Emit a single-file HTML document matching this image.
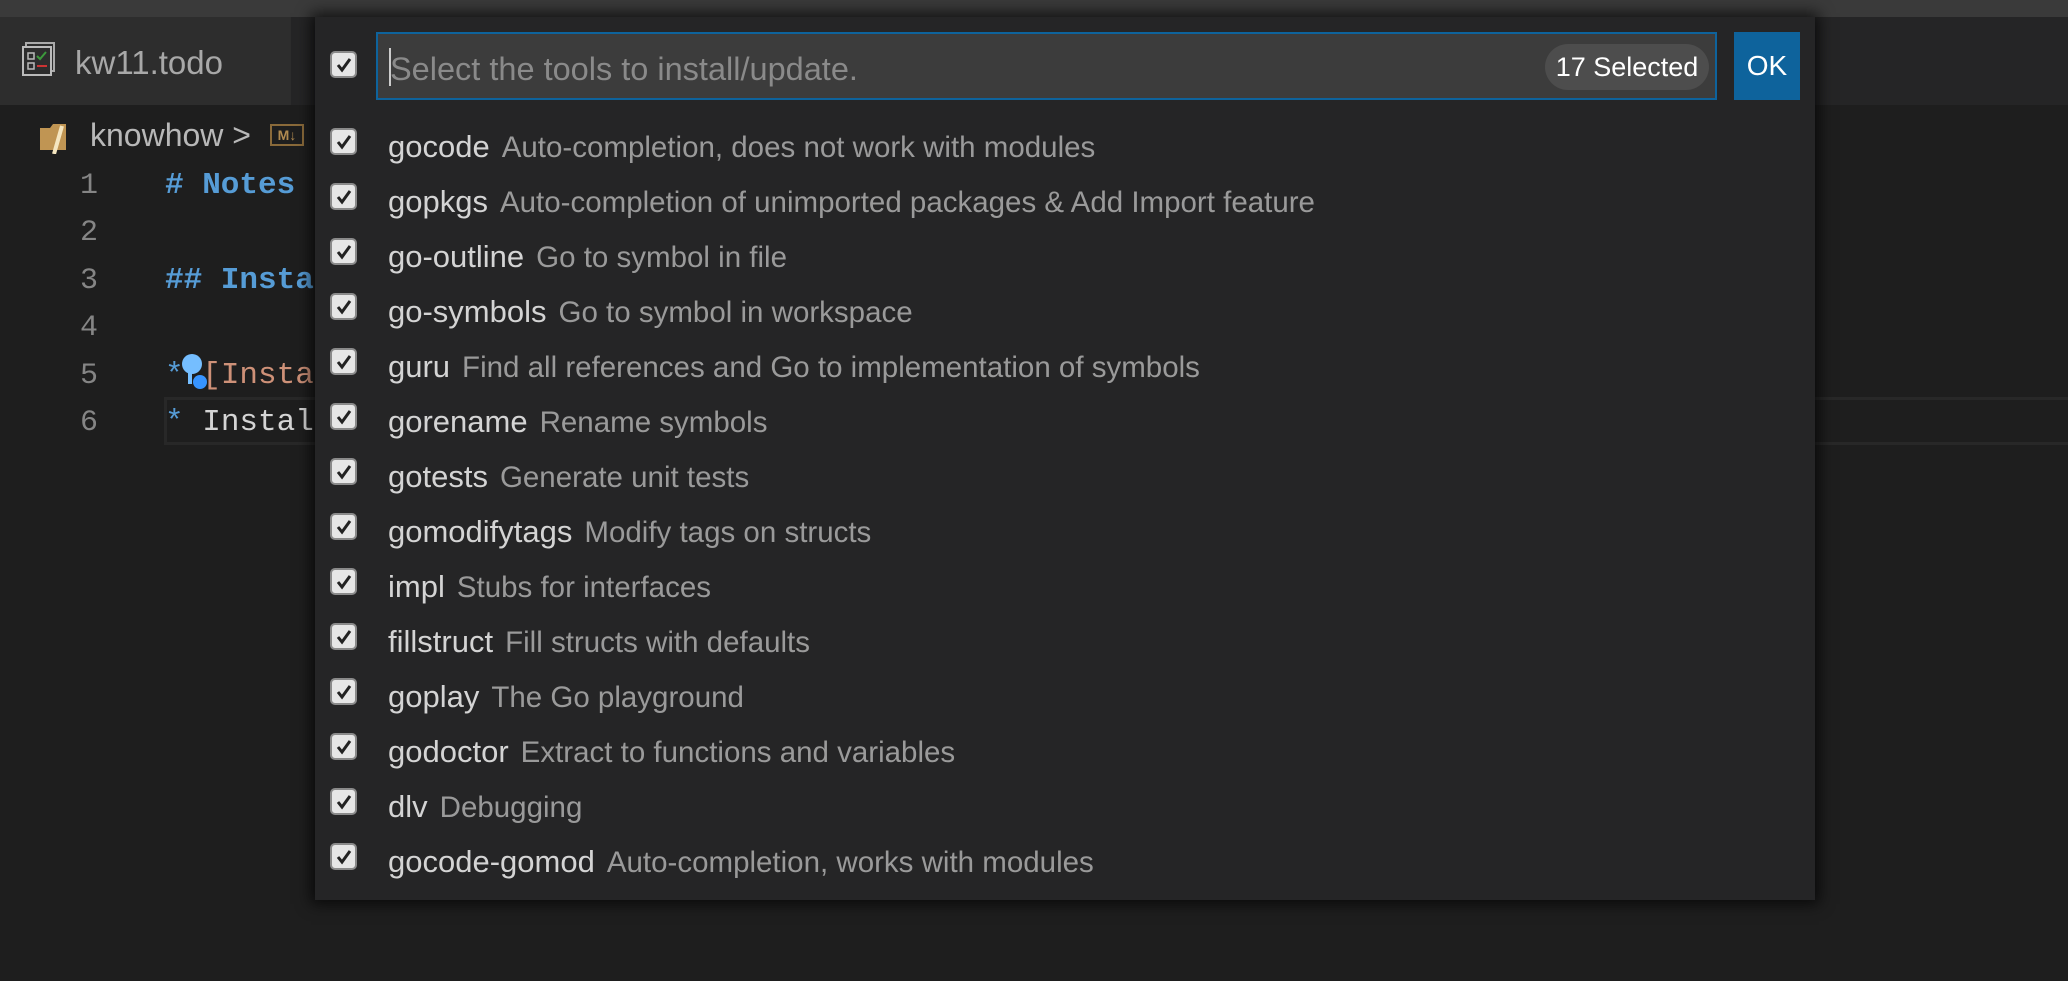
<!DOCTYPE html>
<html><head><meta charset="utf-8"><style>
*{margin:0;padding:0;box-sizing:border-box}
body{width:2068px;height:981px;background:#1e1e1e;position:relative;overflow:hidden;font-family:"Liberation Sans",sans-serif}
.top{position:absolute;left:0;top:0;width:2068px;height:17px;background:#3a3a3a}
.tabs{position:absolute;left:0;top:17px;width:2068px;height:88px;background:#252526}
.tab{position:absolute;left:0;top:0;width:293px;height:88px;background:#2d2d2d;border-right:2px solid #252526}
.tab span{position:absolute;left:75px;top:27px;font-size:33px;color:#a8a8a8}
.crumb{position:absolute;left:90px;top:117px;font-size:32px;color:#b8b8b8}
.ln{position:absolute;left:0;width:98px;text-align:right;font-family:"Liberation Mono",monospace;font-size:30px;color:#858585}
.code{position:absolute;left:165px;font-family:"Liberation Mono",monospace;font-size:31px;white-space:pre}
.hl{position:absolute;left:164px;top:397px;width:1910px;height:48px;border:3px solid #282828}
.qp{position:absolute;left:315px;top:17px;width:1500px;height:883px;background:#252526;box-shadow:0 0 14px 4px rgba(0,0,0,.7)}
.inp{position:absolute;left:61px;top:15px;width:1341px;height:68px;background:#3c3c3c;border:2px solid #0e639c}
.inp .ph{position:absolute;left:12px;top:17px;font-size:32.5px;color:#8a8a8a}
.inp .cur{position:absolute;left:11px;top:14px;width:2px;height:38px;background:#ccc}
.badge{position:absolute;right:6px;top:10px;height:46px;width:164px;border-radius:23px;background:#4d4d4d;color:#fff;font-size:27px;line-height:46px;text-align:center}
.ok{position:absolute;left:1419px;top:15px;width:66px;height:68px;background:#0e639c;color:#fff;font-size:28px;line-height:68px;text-align:center}
.cb{position:absolute;left:15px;width:27px;height:27px;border-radius:5px;background:#e6e6e6;border:2px solid #8a8a8a}
.cb svg{position:absolute;left:3px;top:3px}
.row{position:absolute;left:73px;white-space:nowrap;font-size:31px;line-height:40px}
.row b{font-weight:normal;color:#d4d4d4;margin-right:12px}
.row i{font-style:normal;color:#9a9a9a;font-size:29.5px}
</style></head><body>
<div class="top"></div>
<div class="tabs"><div class="tab">
<svg style="position:absolute;left:21px;top:24px" width="36" height="36" viewBox="0 0 36 36"><rect x="5" y="2" width="28" height="28" fill="none" stroke="#aaa" stroke-width="2"/><rect x="2" y="6" width="28" height="28" fill="#2d2d2d" stroke="#bbb" stroke-width="2"/><rect x="7" y="12" width="6" height="6" fill="none" stroke="#bbb" stroke-width="1.5"/><rect x="7" y="22" width="6" height="6" fill="none" stroke="#bbb" stroke-width="1.5"/><path d="M16 15l3 3 6-7" fill="none" stroke="#3c9a3c" stroke-width="2"/><path d="M16 25h10" stroke="#c33" stroke-width="2"/></svg>
<span>kw11.todo</span></div></div>
<svg style="position:absolute;left:38px;top:120px" width="32" height="34" viewBox="0 0 32 34"><path d="M2 8h10l3-4h13v26H2z" fill="#c09553"/><path d="M24 6l-8 28" stroke="#f5e6c0" stroke-width="4"/></svg>
<div class="crumb">knowhow &gt;</div>
<div style="position:absolute;left:270px;top:124px;width:34px;height:22px;border:2px solid #8a6a3a;color:#b08a50;font-size:14px;font-weight:bold;line-height:18px;text-align:center">M↓</div>
<div class="hl"></div>
<div class="ln" style="top:169px">1</div><div class="ln" style="top:216px">2</div><div class="ln" style="top:264px">3</div><div class="ln" style="top:311px">4</div><div class="ln" style="top:359px">5</div><div class="ln" style="top:406px">6</div>
<div class="code" style="top:168px;color:#569cd6;font-weight:bold"># Notes</div>
<div class="code" style="top:263px;color:#569cd6;font-weight:bold">## Insta</div>
<div class="code" style="top:358px"><span style="color:#569cd6">*</span> <span style="color:#ce9178">[Insta</span></div>
<svg style="position:absolute;left:180px;top:352px" width="30" height="40" viewBox="0 0 30 40"><circle cx="12" cy="12" r="10" fill="#75beff"/><rect x="8" y="20" width="4" height="12" fill="#75beff"/><circle cx="20" cy="30" r="7" fill="#3794ff"/></svg>
<div class="code" style="top:405px;color:#d4d4d4"><span style="color:#569cd6">*</span> Instal</div>
<div class="qp">
<div class="cb" style="top:34px"><svg width="18" height="18" viewBox="0 0 18 18"><path d="M3 9l4 5 8-11" fill="none" stroke="#222" stroke-width="3"/></svg></div>
<div class="inp"><div class="cur"></div><div class="ph">Select the tools to install/update.</div><div class="badge">17 Selected</div></div>
<div class="ok">OK</div>
</div>
<div style="position:absolute;left:315px;top:17px">
<div class="cb" style="top:111px"><svg width="18" height="18" viewBox="0 0 18 18"><path d="M3 9l4 5 8-11" fill="none" stroke="#222" stroke-width="3"/></svg></div><div class="row" style="top:110px"><b>gocode</b><i>Auto-completion, does not work with modules</i></div>
<div class="cb" style="top:166px"><svg width="18" height="18" viewBox="0 0 18 18"><path d="M3 9l4 5 8-11" fill="none" stroke="#222" stroke-width="3"/></svg></div><div class="row" style="top:165px"><b>gopkgs</b><i>Auto-completion of unimported packages &amp; Add Import feature</i></div>
<div class="cb" style="top:221px"><svg width="18" height="18" viewBox="0 0 18 18"><path d="M3 9l4 5 8-11" fill="none" stroke="#222" stroke-width="3"/></svg></div><div class="row" style="top:220px"><b>go-outline</b><i>Go to symbol in file</i></div>
<div class="cb" style="top:276px"><svg width="18" height="18" viewBox="0 0 18 18"><path d="M3 9l4 5 8-11" fill="none" stroke="#222" stroke-width="3"/></svg></div><div class="row" style="top:275px"><b>go-symbols</b><i>Go to symbol in workspace</i></div>
<div class="cb" style="top:331px"><svg width="18" height="18" viewBox="0 0 18 18"><path d="M3 9l4 5 8-11" fill="none" stroke="#222" stroke-width="3"/></svg></div><div class="row" style="top:330px"><b>guru</b><i>Find all references and Go to implementation of symbols</i></div>
<div class="cb" style="top:386px"><svg width="18" height="18" viewBox="0 0 18 18"><path d="M3 9l4 5 8-11" fill="none" stroke="#222" stroke-width="3"/></svg></div><div class="row" style="top:385px"><b>gorename</b><i>Rename symbols</i></div>
<div class="cb" style="top:441px"><svg width="18" height="18" viewBox="0 0 18 18"><path d="M3 9l4 5 8-11" fill="none" stroke="#222" stroke-width="3"/></svg></div><div class="row" style="top:440px"><b>gotests</b><i>Generate unit tests</i></div>
<div class="cb" style="top:496px"><svg width="18" height="18" viewBox="0 0 18 18"><path d="M3 9l4 5 8-11" fill="none" stroke="#222" stroke-width="3"/></svg></div><div class="row" style="top:495px"><b>gomodifytags</b><i>Modify tags on structs</i></div>
<div class="cb" style="top:551px"><svg width="18" height="18" viewBox="0 0 18 18"><path d="M3 9l4 5 8-11" fill="none" stroke="#222" stroke-width="3"/></svg></div><div class="row" style="top:550px"><b>impl</b><i>Stubs for interfaces</i></div>
<div class="cb" style="top:606px"><svg width="18" height="18" viewBox="0 0 18 18"><path d="M3 9l4 5 8-11" fill="none" stroke="#222" stroke-width="3"/></svg></div><div class="row" style="top:605px"><b>fillstruct</b><i>Fill structs with defaults</i></div>
<div class="cb" style="top:661px"><svg width="18" height="18" viewBox="0 0 18 18"><path d="M3 9l4 5 8-11" fill="none" stroke="#222" stroke-width="3"/></svg></div><div class="row" style="top:660px"><b>goplay</b><i>The Go playground</i></div>
<div class="cb" style="top:716px"><svg width="18" height="18" viewBox="0 0 18 18"><path d="M3 9l4 5 8-11" fill="none" stroke="#222" stroke-width="3"/></svg></div><div class="row" style="top:715px"><b>godoctor</b><i>Extract to functions and variables</i></div>
<div class="cb" style="top:771px"><svg width="18" height="18" viewBox="0 0 18 18"><path d="M3 9l4 5 8-11" fill="none" stroke="#222" stroke-width="3"/></svg></div><div class="row" style="top:770px"><b>dlv</b><i>Debugging</i></div>
<div class="cb" style="top:826px"><svg width="18" height="18" viewBox="0 0 18 18"><path d="M3 9l4 5 8-11" fill="none" stroke="#222" stroke-width="3"/></svg></div><div class="row" style="top:825px"><b>gocode-gomod</b><i>Auto-completion, works with modules</i></div>
</div>
</body></html>
